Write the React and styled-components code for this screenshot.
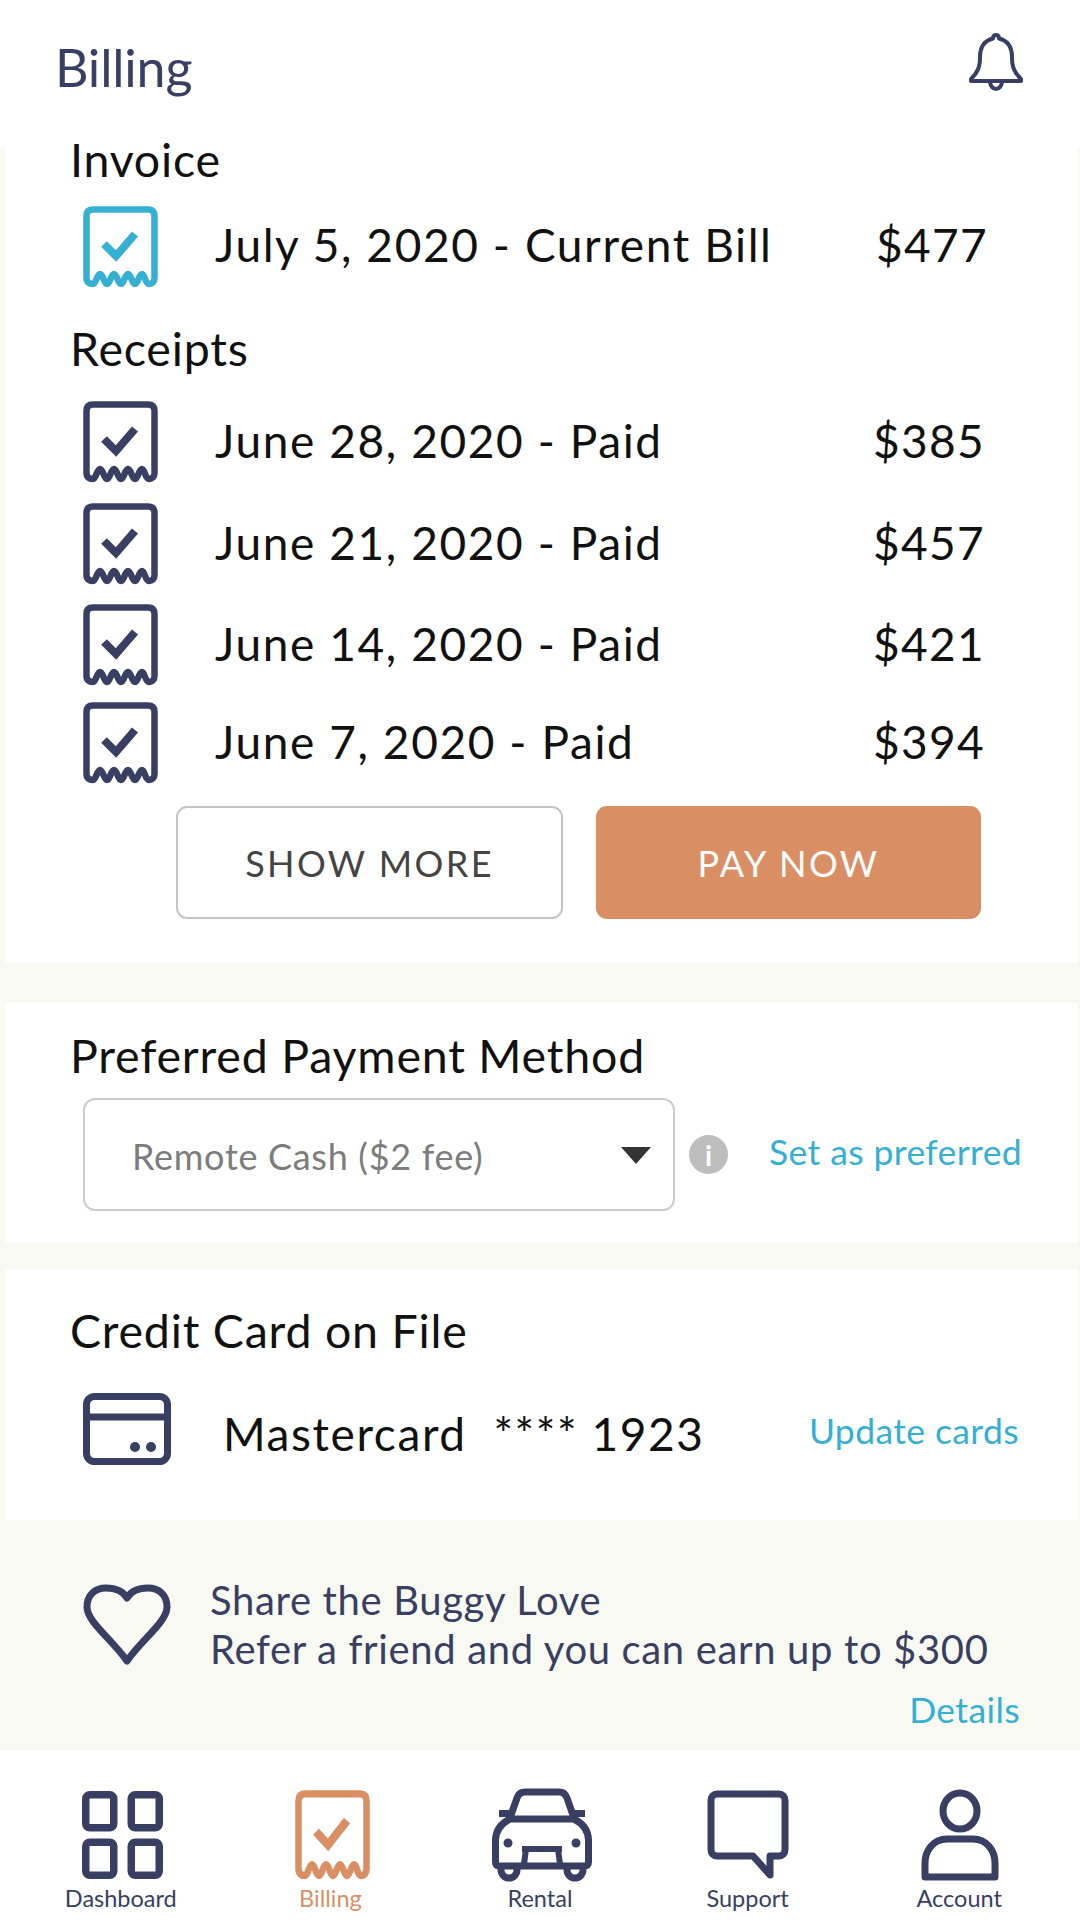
import React from 'react';
import styled, { createGlobalStyle } from 'styled-components';

const Global = createGlobalStyle`
  html, body { margin: 0; padding: 0; background: #fff; }
  body { font-family: Lato, "Open Sans", sans-serif; }
`;
const NAVY = '#383f63';
const BLUE = '#35b0d2';
const ORANGE = '#d98f63';

const Page = styled.div`
  width: 1080px; height: 1920px; display: flex; flex-direction: column;
  background: #f8f9f3; overflow: hidden;
`;
const Header = styled.header`
  height: 148px; flex: none; background: #fff; display: flex; justify-content: space-between;
  padding: 33px 57px 0 55px; box-sizing: border-box;
`;
const Title = styled.h1`
  margin: -1px 0 0; font-size: 52px; line-height: 70px; font-weight: 400; color: ${NAVY}; letter-spacing: -0.2px;
`;
const Card = styled.section`
  background: #fff; margin: ${p => p.$top || 0}px 2px 0 5px; height: ${p => p.$h}px; flex: none;
  box-sizing: border-box; padding: ${p => p.$pad || 0}px 0 0 65px;
`;
const Heading = styled.h2`
  margin: ${p => p.$mt || 0}px 0 ${p => p.$mb || 0}px; font-size: 46.500px; line-height: 56px; font-weight: 400; color: #111; letter-spacing: 0.8px;
`;
const Row = styled.div`
  display: flex; align-items: center; height: ${p => p.$h}px; margin-top: ${p => p.$mt || 0}px;
  margin-left: ${p => p.$ml || 0}px;
`;
const RowIcon = styled.span`
  width: 132px; margin-left: 13px; flex: none; display: flex;
`;
const RowText = styled.span`
  font-size: 46px; color: #111; letter-spacing: 1.600px; flex: 1; white-space: pre; padding-bottom: 4px;
`;
const CardText = styled(RowText)`
  margin-left: 52px; padding: 8px 0 0;
`;
const Amount = styled.span`
  font-size: 46px; color: #111; letter-spacing: 1.300px; margin-right: ${p => p.$mr || 93}px; padding-bottom: 4px;
`;
const Buttons = styled.div`
  display: flex; gap: 33px; margin: 0 0 0 106px; padding-top: 15px;
`;
const Button = styled.button`
  width: ${p => p.$primary ? 385 : 387}px; height: 113px; box-sizing: border-box; border-radius: 11px; font-family: inherit;
  font-size: 36px; letter-spacing: 2.400px; text-transform: uppercase;
  background: ${p => p.$primary ? ORANGE : '#fff'};
  color: ${p => p.$primary ? '#fff' : '#444'};
  border: 2px solid ${p => p.$primary ? ORANGE : '#c4c4c4'};
`;
const SelectRow = styled.div`
  display: flex; align-items: center; margin: 15px 0 0 13px;
`;
const Select = styled.div`
  width: 592px; height: 113px; box-sizing: border-box; border: 2px solid #ccc; border-radius: 12px;
  display: flex; align-items: center; justify-content: space-between; padding: 2px 22px 0 47px;
  font-size: 36px; color: #7c7c7c; letter-spacing: 0.700px; flex: none;
`;
const Caret = styled.span`
  width: 0; height: 0; border-left: 15px solid transparent; border-right: 15px solid transparent;
  border-top: 17px solid #333;
`;
const Info = styled.span`
  width: 39px; height: 39px; border-radius: 50%; background: #bdbdbd; color: #fff; flex: none; margin: 0 41px 0 14px;
  display: flex; align-items: center; justify-content: center; font-size: 28px; font-weight: 700;
`;
const Link = styled.a`
  font-size: 35.500px; color: ${BLUE}; letter-spacing: 0.400px; white-space: nowrap;
  margin-right: ${p => p.$mr || 0}px; padding: ${p => p.$drop || 0}px 0 ${p => p.$lift || 0}px;
`;
const Promo = styled.section`
  height: 230px; flex: none; box-sizing: border-box; padding: 56px 60px 0 83px; display: flex; flex-direction: column;
`;
const PromoTop = styled.div`
  display: flex; gap: 39px;
`;
const HeartWrap = styled.span`
  display: flex; margin-top: 8px;
`;
const PromoText = styled.p`
  margin: 0; font-size: 40px; line-height: 49px; color: ${NAVY}; letter-spacing: 0.650px;
`;
const PromoLink = styled(Link)`
  align-self: flex-end; margin-top: 14px;
`;
const Nav = styled.nav`
  flex: 1; background: #fff; display: grid; grid-template-columns: repeat(5, 1fr); padding: 0 16px;
`;
const NavItem = styled.div`
  display: flex; flex-direction: column; align-items: center; padding-top: 41px;
`;
const NavIcon = styled.div`
  height: 88px; display: flex; align-items: center; justify-content: center;
  margin-left: ${p => p.$nudge || 0}px;
`;
const NavLabel = styled.span`
  font-size: 23.500px; line-height: 30px; color: ${p => p.$active ? ORANGE : NAVY}; margin: 4px 0 0 ${p => p.$nudge || 0}px;
`;

const Receipt = ({ color = NAVY, height = 82 }) => (
  <svg width="75" height={height} viewBox="0 0 75 82" preserveAspectRatio="none" fill="none" stroke={color} strokeWidth="6.500" strokeLinejoin="round" strokeLinecap="round">
    <path d="M10 3.500H65Q71.500 3.500 71.500 10V72C71.500 76 69 78 66 78C62 78 62 68 59 68C56 68 55 78 52 78C49 78 48 68 45 68C42 68 41 78 38 78C35 78 34 68 31 68C28 68 27 78 24 78C21 78 20 68 17 68C14 68 13 78 10 78C6 78 3.500 76 3.500 72V10Q3.500 3.500 10 3.500Z" />
    <path d="M21 38L33 50L52 28" strokeWidth="8" strokeLinecap="butt" strokeLinejoin="miter" />
  </svg>
);
const Bell = () => (
  <svg width="54" height="58" viewBox="0 0 54 58" fill="none" stroke={NAVY} strokeWidth="4" strokeLinejoin="round">
    <path d="M27 2c-2 0-3 1.500-3 3.500C14 8 11 16 11 24c0 10-2 15-9 22v2h50v-2c-7-7-9-12-9-22 0-8-3-16-13-18.500C30 3.500 29 2 27 2Z" />
    <path d="M21 48c0 5 3 8 6 8s6-3 6-8" />
  </svg>
);
const CardIcon = () => (
  <svg width="88" height="72" viewBox="0 0 88 72" fill="none" stroke={NAVY} strokeWidth="7">
    <rect x="3.500" y="3.500" width="81" height="65" rx="8" />
    <path d="M3.500 24H84.500" />
    <circle cx="52" cy="54" r="5" fill={NAVY} stroke="none" />
    <circle cx="68" cy="54" r="5" fill={NAVY} stroke="none" />
  </svg>
);
const Heart = () => (
  <svg width="88" height="82" viewBox="0 0 88 82" fill="none" stroke={NAVY} strokeWidth="7" strokeLinejoin="round">
    <path d="M44 77C30 56 4 38 4 23 4 11 12 4 23 4c9 0 17 3 21 10C48 7 56 4 65 4c11 0 19 7 19 19C84 38 58 56 44 77Z" />
  </svg>
);
const Grid = () => (
  <svg width="81" height="88" viewBox="0 0 81 88" fill="none" stroke={NAVY} strokeWidth="7.500">
    <rect x="3.750" y="3.750" width="28" height="33" rx="4" />
    <rect x="49.250" y="3.750" width="28" height="33" rx="4" />
    <rect x="3.750" y="51.250" width="28" height="33" rx="4" />
    <rect x="49.250" y="51.250" width="28" height="33" rx="4" />
  </svg>
);
const Car = () => (
  <svg width="100" height="94" viewBox="0 0 100 94" fill="none" stroke={NAVY} strokeWidth="7" strokeLinejoin="round">
    <path d="M18 30L25 10Q27 4 33 4H67Q73 4 75 10L82 30" />
    <path d="M7 25.500H18M82 25.500H93" />
    <path d="M18 31H82Q96 38 96.500 52V74Q96.500 78 92 78H8Q3.500 78 3.500 74V52Q4 38 18 31Z" />
    <path d="M30 61H70M34 61L32 76M66 61L68 76" strokeWidth="6" />
    <path d="M9 78V82a8 8 0 0 0 16 0V78M75 78V82a8 8 0 0 0 16 0V78" />
    <circle cx="16" cy="55" r="4.500" fill={NAVY} stroke="none" />
    <circle cx="84" cy="55" r="4.500" fill={NAVY} stroke="none" />
  </svg>
);
const Speech = () => (
  <svg width="82" height="91" viewBox="0 0 82 91" fill="none" stroke={NAVY} strokeWidth="7" strokeLinejoin="round">
    <path d="M10 4H72a6 6 0 0 1 6 6V60a6 6 0 0 1-6 6H63V85L46 66H10a6 6 0 0 1-6-6V10a6 6 0 0 1 6-6Z" />
  </svg>
);
const Person = () => (
  <svg width="78" height="92" viewBox="0 0 78 92" fill="none" stroke={NAVY} strokeWidth="7" strokeLinejoin="round">
    <ellipse cx="39" cy="22" rx="17" ry="18" />
    <path d="M26 50H52C66 50 74 62 74 74V88H4V74C4 62 12 50 26 50Z" />
  </svg>
);

const receipts = [
  ['June 28, 2020 - Paid', '$385', 102],
  ['June 21, 2020 - Paid', '$457', 102],
  ['June 14, 2020 - Paid', '$421', 100],
  ['June 7, 2020 - Paid', '$394', 96],
];
const nav = [
  ['Dashboard', <Grid />, false, 4, 0],
  ['Billing', <Receipt color={ORANGE} height={90} />, true, 4, 0],
  ['Rental', <Car />, false, 5, 0],
  ['Support', <Speech />, false, -4, -4],
  ['Account', <Person />, false, 2, 0],
];

export default function App() {
  return (
    <Page>
      <Global />
      <Header>
        <Title>Billing</Title>
        <Bell />
      </Header>
      <Card $h={815}>
        <Heading $mt={-17}>Invoice</Heading>
        <Row $h={95} $mt={12}>
          <RowIcon><Receipt color={BLUE} /></RowIcon>
          <RowText>July 5, 2020 - Current Bill</RowText>
          <Amount $mr={90}>$477</Amount>
        </Row>
        <Heading $mt={26} $mb={15}>Receipts</Heading>
        {receipts.map(([t, a, h]) => (
          <Row key={t} $h={h}>
            <RowIcon><Receipt /></RowIcon>
            <RowText>{t}</RowText>
            <Amount>{a}</Amount>
          </Row>
        ))}
        <Buttons>
          <Button>Show more</Button>
          <Button $primary>Pay now</Button>
        </Buttons>
      </Card>
      <Card $h={240} $top={40} $pad={24}>
        <Heading>Preferred Payment Method</Heading>
        <SelectRow>
          <Select>Remote Cash ($2 fee)<Caret /></Select>
          <Info>i</Info>
          <Link $lift={7}>Set as preferred</Link>
        </SelectRow>
      </Card>
      <Card $h={251} $top={26} $pad={33}>
        <Heading>Credit Card on File</Heading>
        <Row $h={80} $mt={31} $ml={13}>
          <CardIcon />
          <CardText>{'Mastercard  **** 1923'}</CardText>
          <Link $mr={59} $drop={3}>Update cards</Link>
        </Row>
      </Card>
      <Promo>
        <PromoTop>
          <HeartWrap><Heart /></HeartWrap>
          <PromoText>Share the Buggy Love<br />Refer a friend and you can earn up to $300</PromoText>
        </PromoTop>
        <PromoLink>Details</PromoLink>
      </Promo>
      <Nav>
        {nav.map(([label, icon, active, nudge, labelNudge]) => (
          <NavItem key={label}>
            <NavIcon $nudge={nudge}>{icon}</NavIcon>
            <NavLabel $active={active} $nudge={labelNudge}>{label}</NavLabel>
          </NavItem>
        ))}
      </Nav>
    </Page>
  );
}
